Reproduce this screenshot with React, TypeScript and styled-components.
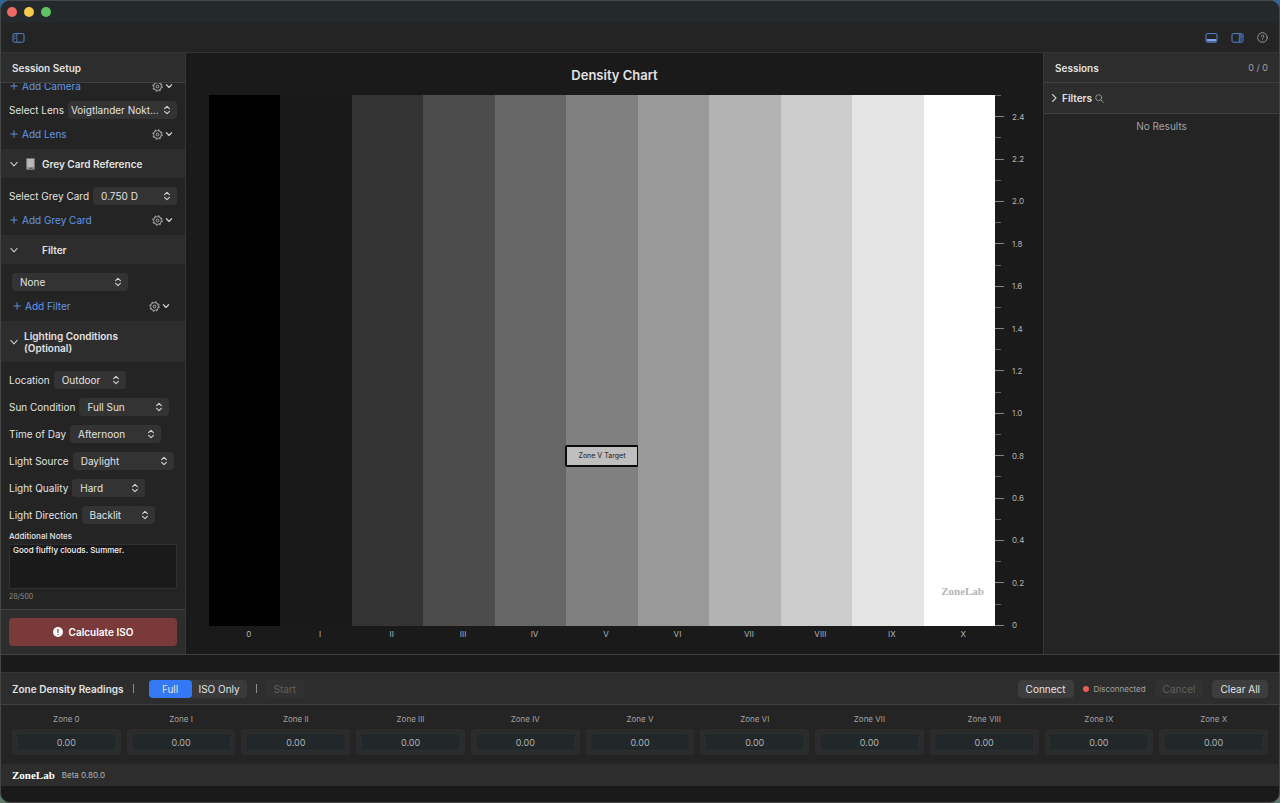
import React, { useState } from "react";
import styled, { createGlobalStyle, css } from "styled-components";

const color = {
  base: "#1a1a1a",
  panel: "#242424",
  raised: "#2d2d2d",
  control: "#333333",
  line: "#404040",
  text: "#e2e2e2",
  muted: "#a2a2a2",
  link: "#6496e6",
};

const GlobalStyle = createGlobalStyle`
  *, *::before, *::after { box-sizing: border-box; }
  body {
    margin: 0;
    background: linear-gradient(to bottom, #2f6798, #3c5a66 50%, #5d7a6c);
    font-family: Inter, "Liberation Sans", sans-serif;
    font-size: 10px;
    line-height: 12px;
    color: ${color.text};
  }
  button, input, select, textarea { font: inherit; color: inherit; margin: 0; }
  h1, h2, h3 { margin: 0; font-size: inherit; font-weight: 600; }
`;

const Window = styled.div`
  height: 100vh;
  display: flex;
  flex-direction: column;
  overflow: hidden;
  border: 1px solid #454747;
  border-radius: 10px;
  background: ${color.base};
`;

const TitleBar = styled.div`
  display: flex;
  align-items: center;
  gap: 7px;
  height: 22px;
  padding-left: 6px;
  background: #24292b;
`;

const TrafficLight = styled.span<{ $color: string }>`
  width: 10px;
  height: 10px;
  border-radius: 50%;
  background: ${(p) => p.$color};
`;

const Toolbar = styled.div`
  display: flex;
  align-items: center;
  gap: 13px;
  height: 30px;
  padding: 0 11px;
  background: ${color.panel};
  border-bottom: 1px solid #333333;
`;

const Spacer = styled.div`
  flex: 1;
`;

const IconButton = styled.button<{ $muted?: boolean }>`
  display: flex;
  padding: 0;
  border: 0;
  background: none;
  color: ${(p) => (p.$muted ? "#a0a0a0" : "#5585d0")};
`;

const Main = styled.main`
  flex: 1;
  min-height: 0;
  display: grid;
  grid-template-columns: 185px 1fr 236px;
  border-bottom: 1px solid ${color.line};
`;

const Sidebar = styled.aside<{ $side: "left" | "right" }>`
  display: flex;
  flex-direction: column;
  min-height: 0;
  background: ${color.panel};
  ${(p) => (p.$side === "left" ? "border-right" : "border-left")}: 1px solid #363636;
`;

const PanelHeader = styled.header`
  display: flex;
  align-items: center;
  justify-content: space-between;
  height: 30px;
  flex: none;
  padding: 0 11px;
  background: ${color.raised};
  border-bottom: 1px solid ${color.line};
`;

const Count = styled.span`
  color: ${color.muted};
  font-size: 9px;
`;

const SetupScroll = styled.div`
  flex: 1;
  min-height: 0;
  overflow: hidden;
  display: flex;
  flex-direction: column;
  justify-content: flex-end;
`;

const SectionHeader = styled.button<{ $tall?: boolean }>`
  display: flex;
  align-items: center;
  flex: none;
  height: ${(p) => (p.$tall ? 41 : 29)}px;
  padding: 0 8px;
  border: 0;
  background: ${color.raised};
  text-align: left;
  font-weight: 600;
`;

const SectionIcon = styled.span<{ $narrow?: boolean }>`
  display: flex;
  justify-content: center;
  width: ${(p) => (p.$narrow ? 5 : 23)}px;
  flex: none;
`;

const SectionBody = styled.div<{ $inset?: boolean; $last?: boolean }>`
  display: flex;
  flex-direction: column;
  flex: none;
  gap: 9px;
  padding: 9px ${(p) => (p.$inset ? 11 : 8)}px ${(p) => (p.$last ? 6 : 9)}px;
`;

const Field = styled.div`
  display: flex;
  align-items: center;
  gap: 4px;
  height: 18px;
  white-space: nowrap;
`;

const SelectBox = styled.span<{ $width?: number }>`
  position: relative;
  display: flex;
  height: 18px;
  ${(p) => (p.$width ? css`width: ${p.$width}px;` : css`flex: 1;`)}
`;

const SelectControl = styled.select<{ $tight?: boolean }>`
  appearance: none;
  width: 100%;
  min-width: 0;
  padding: 0 8px 0 ${(p) => (p.$tight ? 3 : 8)}px;
  border: 0;
  border-radius: 4px;
  background: ${color.control};
`;

const SelectArrows = styled.svg`
  position: absolute;
  right: 6px;
  top: 4px;
  pointer-events: none;
`;

const AddRow = styled.div`
  display: flex;
  align-items: center;
  justify-content: space-between;
  height: 12px;
`;

const AddButton = styled.button`
  display: flex;
  align-items: center;
  gap: 4px;
  padding: 0 1px;
  border: 0;
  background: none;
  color: ${color.link};
`;

const GearButton = styled.button`
  display: flex;
  align-items: center;
  gap: 2px;
  padding: 0 4px;
  border: 0;
  background: none;
`;

const NotesField = styled.div`
  display: flex;
  flex-direction: column;
  flex: none;
  gap: 2px;
  padding: 0 8px 6px;
  font-size: 8px;
  font-weight: 500;
`;

const NotesInput = styled.textarea`
  height: 45px;
  padding: 0 3px;
  resize: none;
  border: 1px solid #303030;
  background: ${color.base};
  color: #f2f2f2;
  line-height: 10px;
`;

const NotesCount = styled.span`
  color: #8c8c8c;
  font-size: 7px;
  font-weight: 400;
`;

const SetupFooter = styled.footer`
  flex: none;
  padding: 8px;
  background: ${color.raised};
  border-top: 1px solid ${color.line};
`;

const CalculateButton = styled.button`
  display: flex;
  align-items: center;
  justify-content: center;
  gap: 6px;
  width: 100%;
  height: 28px;
  border: 0;
  border-radius: 4px;
  background: #7b3a3a;
  color: #ffffff;
  font-weight: 600;
`;

const ChartPanel = styled.section`
  display: flex;
  flex-direction: column;
  min-width: 0;
  padding: 14px 12px 14px 23px;
`;

const ChartTitle = styled.h1`
  height: 28px;
  padding-right: 11px;
  font-size: 13px;
  line-height: 16px;
  text-align: center;
`;

const ChartArea = styled.div`
  flex: 1;
  min-height: 0;
  display: grid;
  grid-template-columns: 1fr 36px;
  grid-template-rows: 1fr 14px;
`;

const Bars = styled.div`
  display: flex;
`;

const Bar = styled.div<{ $shade: string }>`
  position: relative;
  flex: 1;
  background: ${(p) => p.$shade};
`;

const Target = styled.div`
  position: absolute;
  left: -1px;
  right: -1px;
  bottom: 30%;
  height: 22px;
  border: 2px solid #0b0b0b;
  border-radius: 2px;
  background: #bfbfbf;
  color: #3a3a3a;
  font-size: 7px;
  font-weight: 500;
  line-height: 18px;
  text-align: center;
`;

const Wordmark = styled.span`
  font-family: "Liberation Serif", serif;
  font-size: 11px;
  font-weight: 700;
  color: #ffffff;
`;

const Watermark = styled(Wordmark)`
  position: absolute;
  right: 11px;
  bottom: 29px;
  color: #b4b4b4;
`;

const Axis = styled.div`
  display: flex;
  flex-direction: column;
  justify-content: space-between;
`;

const Tick = styled.div`
  display: flex;
  align-items: center;
  gap: 8px;
  height: 1px;
  color: #b4b4b4;
  font-size: 8px;
`;

const TickMark = styled.span<{ $major: boolean }>`
  width: ${(p) => (p.$major ? 9 : 6)}px;
  height: 1px;
  background: ${(p) => (p.$major ? "#858585" : "#5e5e5e")};
`;

const BarLabels = styled.div`
  display: flex;
  padding: 2px 0 0 4px;
  margin-right: -4px;
  color: #b4b4b4;
  font-size: 8px;
  text-align: center;
`;

const BarLabel = styled.span`
  flex: 1;
`;

const FiltersButton = styled.button`
  display: flex;
  align-items: center;
  gap: 3px;
  height: 31px;
  flex: none;
  padding: 0 5px;
  border: 0;
  border-bottom: 1px solid ${color.line};
  background: ${color.raised};
  font-weight: 600;
`;

const EmptyText = styled.p`
  margin: 5px 0;
  text-align: center;
  color: ${color.muted};
  line-height: 14px;
`;

const Readings = styled.section`
  margin-top: 17px;
  background: ${color.panel};
`;

const ReadingsBar = styled.div`
  display: flex;
  align-items: center;
  height: 33px;
  padding: 0 11px;
  background: ${color.raised};
  border-top: 1px solid #363636;
  border-bottom: 1px solid ${color.line};
`;

const Divider = styled.span`
  width: 1px;
  height: 9px;
  margin: 0 9px;
  background: #8a8a8a;
`;

const TitleDivider = styled(Divider)`
  margin-right: 15px;
`;

const Segmented = styled.div`
  display: flex;
  border-radius: 4px;
  background: #3a3a3a;
`;

const Segment = styled.button<{ $active?: boolean }>`
  width: ${(p) => (p.$active ? 43 : 55)}px;
  height: 18px;
  padding: 0;
  border: 0;
  border-radius: 4px;
  background: ${(p) => (p.$active ? "#3478f6" : "transparent")};
`;

const PushButton = styled.button`
  height: 18px;
  padding: 0 8px;
  border: 0;
  border-radius: 4px;
  background: #3d3d3d;
  &:disabled {
    background: #313131;
    color: #5f5f5f;
  }
`;

const Actions = styled.div`
  display: flex;
  align-items: center;
  gap: 9px;
`;

const Status = styled.span`
  display: flex;
  align-items: center;
  gap: 5px;
  color: ${color.muted};
  font-size: 8px;
`;

const StatusDot = styled.span`
  width: 6px;
  height: 6px;
  border-radius: 50%;
  background: #ea5a5c;
`;

const ZoneGrid = styled.div`
  display: grid;
  grid-template-columns: repeat(11, 1fr);
  gap: 6px;
  padding: 8px 11px 9px;
`;

const ZoneCell = styled.label`
  display: flex;
  flex-direction: column;
  gap: 4px;
  min-width: 0;
  text-align: center;
  color: ${color.muted};
  font-size: 8px;
`;

const ZoneFrame = styled.span`
  display: flex;
  padding: 4px;
  border-radius: 3px;
  background: #2b2b2b;
`;

const ZoneInput = styled.input`
  width: 100%;
  min-width: 0;
  height: 18px;
  padding: 0;
  border: 1px solid #2b3033;
  border-radius: 4px;
  background: #22272a;
  color: #b0b0b0;
  text-align: center;
  font-size: 9px;
`;

const StatusBar = styled.footer`
  display: flex;
  align-items: center;
  gap: 7px;
  height: 22px;
  margin-bottom: 16px;
  padding: 0 11px;
  background: ${color.raised};
`;

const Version = styled.span`
  color: #b4b4b4;
  font-size: 8px;
`;

const Chevron = ({ right = false, size = 10 }: { right?: boolean; size?: number }) => (
  <svg width={size} height={size} viewBox="0 0 10 10" fill="none" stroke="#c8c8c8" strokeWidth={size < 10 ? 1.6 : 1.1} strokeLinecap="round" strokeLinejoin="round">
    <path d={right ? "M3.5 1.5 7 5 3.5 8.5" : "M1.8 3.4 5 6.8 8.2 3.4"} />
  </svg>
);

const Gear = () => (
  <svg width="11" height="11" viewBox="0 0 12 12" fill="none" stroke="#c4c4c4">
    <circle cx="6" cy="6" r="5.2" strokeWidth="1" strokeDasharray="1.9 2.18" />
    <circle cx="6" cy="6" r="4.3" strokeWidth="0.9" />
    <circle cx="6" cy="6" r="1.5" strokeWidth="0.9" />
  </svg>
);

const Plus = () => (
  <svg width="8" height="8" viewBox="0 0 8 8" stroke={color.link} strokeWidth="0.9" strokeLinecap="round">
    <path d="M4 .8v6.4M.8 4h6.4" />
  </svg>
);

const GreyCard = () => (
  <svg width="9" height="12" viewBox="0 0 9 12">
    <rect x="0.2" y="0.2" width="8.6" height="11.6" rx="0.8" fill="#8a8a8a" />
    <rect x="1.2" y="1" width="6.6" height="8.2" fill="#b9b9b9" />
    <path d="M3.4 10.3h3.2" stroke="#555" strokeWidth="0.9" />
  </svg>
);

const PanelIcon = ({ side }: { side: "left" | "bottom" | "right" }) => (
  <svg width="13" height="10" viewBox="0 0 13 10" fill="none" stroke="currentColor" strokeWidth="1">
    <rect x="1" y="0.6" width="11" height="8.6" rx="1.4" />
    {side === "left" && <path d="M4.8.8v8.4M2.3 2.6h1.2M2.3 4.2h1.2M2.3 5.8h1.2" strokeWidth="0.8" />}
    {side === "right" && (
      <>
        <rect x="8.5" y="1" width="3" height="8" fill="#315080" stroke="none" />
        <path d="M8.3.8v8.4M9.5 2.6h1.3M9.5 4.2h1.3" strokeWidth="0.8" />
      </>
    )}
    {side === "bottom" && <rect x="1.9" y="6" width="9.2" height="2.4" fill="#7aa6ee" stroke="none" />}
  </svg>
);

const HelpIcon = () => (
  <svg width="11" height="11" viewBox="0 0 11 11" fill="none" stroke="currentColor" strokeWidth="0.9" strokeLinecap="round">
    <circle cx="5.5" cy="5.5" r="4.8" />
    <path d="M4.2 4.4c0-1.7 2.7-1.6 2.7 0 0 1-1.4 1-1.4 2M5.5 7.9v.1" />
  </svg>
);

const SearchIcon = () => (
  <svg width="9" height="9" viewBox="0 0 9 9" fill="none" stroke="#9a9a9a" strokeWidth="0.9" strokeLinecap="round">
    <circle cx="3.7" cy="3.7" r="3" />
    <path d="m6 6 2.4 2.4" />
  </svg>
);

const AlertIcon = () => (
  <svg width="10" height="10" viewBox="0 0 10 10">
    <circle cx="5" cy="5" r="5" fill="#fff" />
    <path d="M5 2.4v3.1M5 7.3v.1" stroke="#7b3a3a" strokeWidth="1.2" strokeLinecap="round" />
  </svg>
);

interface PickerProps {
  id: string;
  label?: string;
  value: string;
  width?: number;
  tight?: boolean;
}

const Picker = ({ id, label, value, width, tight }: PickerProps) => (
  <Field>
    {label && <label htmlFor={id}>{label}</label>}
    <SelectBox $width={width}>
      <SelectControl id={id} $tight={tight} aria-label={label ?? "Filter"}>
        <option>{value}</option>
      </SelectControl>
      <SelectArrows width="8" height="10" viewBox="0 0 8 10" fill="none" stroke="#d6d6d6" strokeWidth="1.1" strokeLinecap="round" strokeLinejoin="round">
        <path d="M1.6 3.6 4 1.4l2.4 2.2M1.6 6.4 4 8.6l2.4-2.2" />
      </SelectArrows>
    </SelectBox>
  </Field>
);

const AddItem = ({ label }: { label: string }) => (
  <AddRow>
    <AddButton>
      <Plus />
      {label}
    </AddButton>
    <GearButton aria-label="Manage">
      <Gear />
      <Chevron size={8} />
    </GearButton>
  </AddRow>
);

const conditions = [
  { id: "location", label: "Location", value: "Outdoor", width: 72 },
  { id: "sun", label: "Sun Condition", value: "Full Sun", width: 90 },
  { id: "time", label: "Time of Day", value: "Afternoon", width: 91 },
  { id: "source", label: "Light Source", value: "Daylight", width: 101 },
  { id: "quality", label: "Light Quality", value: "Hard", width: 73 },
  { id: "direction", label: "Light Direction", value: "Backlit", width: 73 },
];

const zones = [
  { name: "0", shade: "#000000" },
  { name: "I", shade: "#191919" },
  { name: "II", shade: "#333333" },
  { name: "III", shade: "#4c4c4c" },
  { name: "IV", shade: "#666666" },
  { name: "V", shade: "#808080" },
  { name: "VI", shade: "#999999" },
  { name: "VII", shade: "#b3b3b3" },
  { name: "VIII", shade: "#cccccc" },
  { name: "IX", shade: "#e5e5e5" },
  { name: "X", shade: "#ffffff" },
];

const ticks = Array.from({ length: 26 }, (_, i) => 25 - i);

export default function App() {
  const [notes, setNotes] = useState("Good fluffly clouds. Summer.");

  return (
    <>
      <GlobalStyle />
      <Window>
        <TitleBar>
          <TrafficLight $color="#ed6a66" />
          <TrafficLight $color="#f5cb4c" />
          <TrafficLight $color="#60c464" />
        </TitleBar>
        <Toolbar>
          <IconButton aria-label="Toggle setup panel"><PanelIcon side="left" /></IconButton>
          <Spacer />
          <IconButton aria-label="Toggle readings panel"><PanelIcon side="bottom" /></IconButton>
          <IconButton aria-label="Toggle sessions panel"><PanelIcon side="right" /></IconButton>
          <IconButton aria-label="Help" $muted><HelpIcon /></IconButton>
        </Toolbar>

        <Main>
          <Sidebar $side="left">
            <PanelHeader><h2>Session Setup</h2></PanelHeader>
            <SetupScroll>
              <SectionBody>
                <AddItem label="Add Camera" />
                <Picker id="lens" label="Select Lens" value="Voigtlander Nokt..." tight />
                <AddItem label="Add Lens" />
              </SectionBody>
              <SectionHeader>
                <Chevron />
                <SectionIcon><GreyCard /></SectionIcon>
                Grey Card Reference
              </SectionHeader>
              <SectionBody>
                <Picker id="grey-card" label="Select Grey Card" value="0.750 D" />
                <AddItem label="Add Grey Card" />
              </SectionBody>
              <SectionHeader>
                <Chevron />
                <SectionIcon />
                Filter
              </SectionHeader>
              <SectionBody $inset>
                <Picker id="filter" value="None" width={116} />
                <AddItem label="Add Filter" />
              </SectionBody>
              <SectionHeader $tall>
                <Chevron />
                <SectionIcon $narrow />
                <span>Lighting Conditions<br />(Optional)</span>
              </SectionHeader>
              <SectionBody $last>
                {conditions.map((c) => <Picker key={c.id} {...c} />)}
              </SectionBody>
              <NotesField>
                <label htmlFor="notes">Additional Notes</label>
                <NotesInput id="notes" value={notes} maxLength={500} spellCheck={false} onChange={(e) => setNotes(e.target.value)} />
                <NotesCount>{`${notes.length}/500`}</NotesCount>
              </NotesField>
            </SetupScroll>
            <SetupFooter>
              <CalculateButton><AlertIcon />Calculate ISO</CalculateButton>
            </SetupFooter>
          </Sidebar>

          <ChartPanel>
            <ChartTitle>Density Chart</ChartTitle>
            <ChartArea>
              <Bars>
                {zones.map((z) => (
                  <Bar key={z.name} $shade={z.shade}>
                    {z.name === "V" && <Target>Zone V Target</Target>}
                    {z.name === "X" && <Watermark>ZoneLab</Watermark>}
                  </Bar>
                ))}
              </Bars>
              <Axis>
                {ticks.map((t) => (
                  <Tick key={t}>
                    <TickMark $major={t % 2 === 0} />
                    {t % 2 === 0 && <span>{t === 0 ? "0" : (t / 10).toFixed(1)}</span>}
                  </Tick>
                ))}
              </Axis>
              <BarLabels>
                {zones.map((z) => <BarLabel key={z.name}>{z.name}</BarLabel>)}
              </BarLabels>
            </ChartArea>
          </ChartPanel>

          <Sidebar $side="right">
            <PanelHeader><h2>Sessions</h2><Count>0 / 0</Count></PanelHeader>
            <FiltersButton><Chevron right />Filters<SearchIcon /></FiltersButton>
            <EmptyText>No Results</EmptyText>
          </Sidebar>
        </Main>

        <Readings>
          <ReadingsBar>
            <h2>Zone Density Readings</h2>
            <TitleDivider />
            <Segmented>
              <Segment $active>Full</Segment>
              <Segment>ISO Only</Segment>
            </Segmented>
            <Divider />
            <PushButton disabled>Start</PushButton>
            <Spacer />
            <Actions>
              <PushButton>Connect</PushButton>
              <Status><StatusDot />Disconnected</Status>
              <PushButton disabled>Cancel</PushButton>
              <PushButton>Clear All</PushButton>
            </Actions>
          </ReadingsBar>
          <ZoneGrid>
            {zones.map((z) => (
              <ZoneCell key={z.name}>
                {`Zone ${z.name}`}
                <ZoneFrame><ZoneInput defaultValue="0.00" /></ZoneFrame>
              </ZoneCell>
            ))}
          </ZoneGrid>
        </Readings>
        <StatusBar>
          <Wordmark>ZoneLab</Wordmark>
          <Version>Beta 0.80.0</Version>
        </StatusBar>
      </Window>
    </>
  );
}
